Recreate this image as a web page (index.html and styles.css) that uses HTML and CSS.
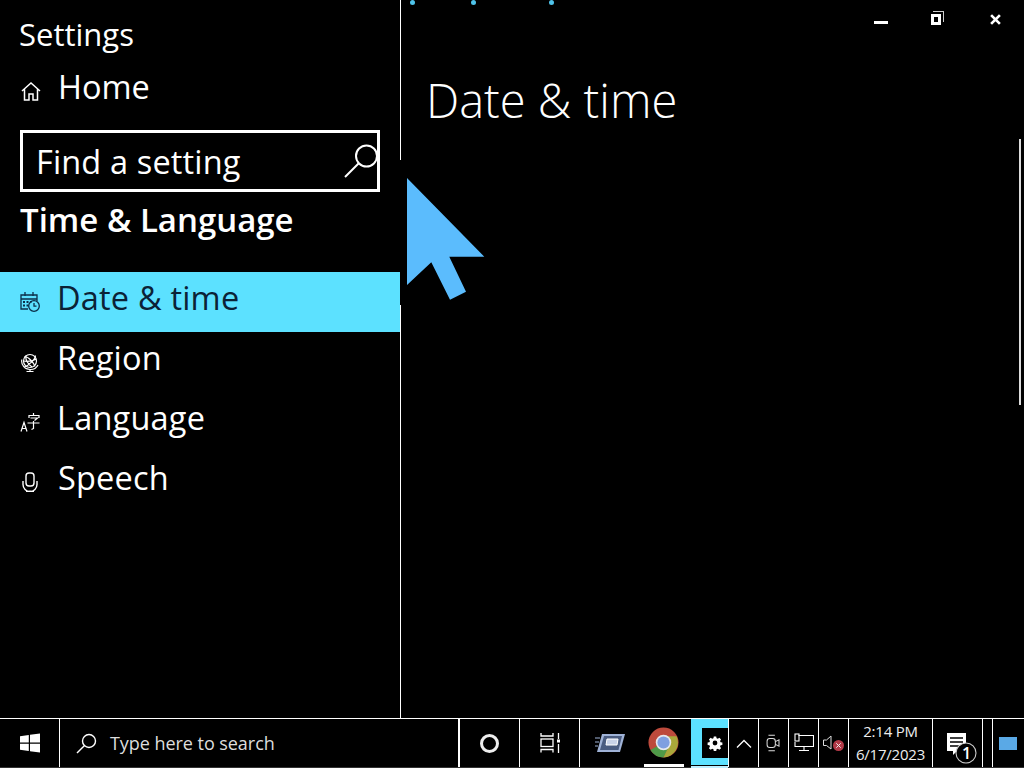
FILE: index.html
```html
<!DOCTYPE html>
<html lang="en">
<head>
<meta charset="utf-8">
<title>Settings - Date &amp; time</title>
<link rel="stylesheet" href="styles.css">
</head>
<body>
<div class="screen">
  <div class="window">
    <aside class="sidebar">
      <div class="app-title">Settings</div>
      <div class="home-row">
        <svg class="nav-icon" viewBox="0 0 20 20"><path d="M1 10 10 2l9 8M3.500 8V19H8v-6h4v6h4.500V8" fill="none" stroke="#fff" stroke-width="1.500"/></svg>
        <span class="home-label">Home</span>
      </div>
      <div class="search-box">
        <span class="search-text">Find a setting</span>
        <svg class="search-icon" viewBox="0 0 36 34"><circle cx="22.500" cy="12" r="10.500" fill="none" stroke="#fff" stroke-width="2"/><path d="M15 19 1 33" stroke="#fff" stroke-width="2" fill="none"/></svg>
      </div>
      <div class="section-title">Time &amp; Language</div>
      <nav class="nav">
        <div class="nav-item active">
          <svg class="nav-icon" viewBox="0 0 20 20"><g fill="none" stroke="#0b2f4a" stroke-width="1.300"><path d="M8 17H1V3h16v6M1 7h16M5 0v4M13 0v4"/><circle cx="14" cy="14" r="5.300"/><path d="M14 11v3.200h2.500"/></g><path d="M3 9h2v2H3zM6.500 9h2v2h-2zM10 9h2v1.500h-2zM3 12.500h2v2H3zM6.500 12.500h2v2h-2z" fill="#0b2f4a"/></svg>
          <span>Date &amp; time</span>
        </div>
        <div class="nav-item">
          <svg class="nav-icon" viewBox="0 0 20 20"><g fill="none" stroke="#fff" stroke-width="1.200"><circle cx="10" cy="9" r="6.500"/><path d="M4.500 4.500c4 0 9 6 10.500 10M15.500 3.500c0 4-7 10-11 11.500M6 3.500c-1 4 2 9 6 11.500M3.500 9c4 1 9 0 13-2M1.800 7.500A8.500 8.500 0 0 0 10 17.500a8.500 8.500 0 0 0 8-4.500M10 17.500V20M6.500 19.500h7"/></g></svg>
          <span>Region</span>
        </div>
        <div class="nav-item">
          <svg class="nav-icon" viewBox="0 0 20 20"><g fill="none" stroke="#fff" stroke-width="1.200"><path d="M1 19.500 4 10.500l3 9M2 16.500h4"/><path d="M13.500 1v2M9 6V3.500h10V6M10.500 6h7l-3 2.500M7.500 11h12M13.500 9v7.500l-2 1"/></g></svg>
          <span>Language</span>
        </div>
        <div class="nav-item speech">
          <svg class="nav-icon" viewBox="0 0 20 20"><g fill="none" stroke="#fff" stroke-width="1.400"><rect x="6" y="1" width="8" height="13" rx="3"/><path d="M3 9v3.500a7 7 0 0 0 14 0V9M10 18.500V20M6 19.500h8"/></g></svg>
          <span>Speech</span>
        </div>
      </nav>
    </aside>
    <main class="content">
      <div class="title-bar">
        <div class="dots"><i class="dot dot-a"></i><i class="dot dot-b"></i><i class="dot"></i></div>
        <div class="controls">
          <i class="ctl-min"></i>
          <i class="ctl-max"></i>
          <svg class="ctl-close" viewBox="0 0 10 10"><path d="M1 1 9 9M9 1 1 9" stroke="#fff" stroke-width="2.400"/></svg>
        </div>
      </div>
      <h1 class="page-title">Date &amp; time</h1>
      <i class="scrollbar"></i>
    </main>
  </div>
  <footer class="taskbar">
    <div class="cell start">
      <svg class="win-logo" viewBox="0 0 20 20"><path d="M0 3.200 8.800 2v7.600H0zM10 1.800 20 .4v9.200H10zM0 10.800h8.800v7.200L0 16.800zM10 10.800h10v8.800l-10-1.400z" fill="#fff"/></svg>
    </div>
    <div class="cell search">
      <svg class="task-search" viewBox="0 0 21 21"><circle cx="13" cy="8" r="6.500" fill="none" stroke="#fff" stroke-width="1.400"/><path d="M8.300 12.700 1 20" stroke="#fff" stroke-width="1.400"/></svg>
      <span>Type here to search</span>
    </div>
    <div class="cell cortana"><i class="ring"></i></div>
    <div class="cell taskview">
      <svg class="tv-icon" viewBox="0 0 20 22"><g fill="none" stroke="#fff" stroke-width="1.300"><path d="M1 1v3h12V1M1 20.500v-3h12v3"/><rect x="1" y="7" width="12" height="7.500"/><path d="M18.500 1v6M18.500 12v9"/></g><rect x="17" y="7.500" width="3" height="3" fill="#fff"/></svg>
    </div>
    <div class="app-icons">
      <div class="app-cell reader">
        <svg class="reader-icon" viewBox="0 0 30 20"><path d="M7 1H30l-5 18H2z" fill="#9fb2d6"/><path d="M9 3H27l-3.500 14H5z" fill="#4a5c80"/><path d="M12 6h11l-1 6H11z" fill="#c9d3e8" stroke="#fff"/><path d="M0 5h5M0 9h4M0 13h3" stroke="#9fb2d6"/></svg>
      </div>
      <div class="app-cell chrome">
        <svg class="chrome-icon" viewBox="0 0 32 32"><circle cx="16" cy="16" r="15.500" fill="#bd4a3c"/><path d="M16 16 2.600 23.800A15.500 15.500 0 0 0 16 31.500L24 16z" fill="#4e9a48"/><path d="M16 9.500h13.500A15.500 15.500 0 0 1 16 31.500L23 17z" fill="#a9a83a"/><circle cx="16" cy="16" r="8" fill="#e6e8ee"/><circle cx="16" cy="16" r="6.300" fill="#7f9fe0"/></svg>
        <i class="chrome-bar"></i>
      </div>
      <div class="app-cell settings-app">
        <div class="settings-inner">
          <svg class="gear" viewBox="0 0 24 24"><path fill="#fff" fill-rule="evenodd" d="M10 1h4l.6 3 2.100.9 2.600-1.700 2.800 2.800-1.700 2.600.9 2.100 3 .6v4l-3 .6-.9 2.100 1.700 2.600-2.800 2.800-2.600-1.700-2.100.9-.6 3h-4l-.6-3-2.100-.9-2.600 1.700-2.800-2.800 1.700-2.600-.9-2.100-3-.6v-4l3-.6.9-2.100L1.900 6l2.800-2.800 2.600 1.700L9.400 4zM12 8a4 4 0 1 0 0 8 4 4 0 0 0 0-8z" transform="translate(1.200 1.200) scale(.9)"/></svg>
        </div>
      </div>
    </div>
    <div class="cell chevron"><svg class="chev-icon" viewBox="0 0 16 9"><path d="M1 8.500 8 1.500l7 7" fill="none" stroke="#fff" stroke-width="1.300"/></svg></div>
    <div class="cell tray">
      <svg class="tray-meet" viewBox="0 0 16 24"><g fill="none" stroke="#ddd" stroke-width="1.100"><path d="M2.500 3.500h7M2.500 20.500h7"/><rect x="1" y="7" width="9" height="10" rx="3"/><path d="M10 10.500l4-2v7l-4-2"/></g></svg>
    </div>
    <div class="cell tray">
      <svg class="tray-net" viewBox="0 0 20 20"><g fill="none" stroke="#fff" stroke-width="1.100"><path d="M4.500 2.500H19.500V13.500H1V9"/><rect x="1" y="1" width="4" height="7"/><path d="M10 13.500V17M5 17.500h10"/></g></svg>
    </div>
    <div class="cell tray">
      <svg class="tray-vol" viewBox="0 0 21 16"><path d="M.5 5h3L8 1v13L3.500 10.500h-3z" fill="none" stroke="#ddd"/><circle cx="15.500" cy="10.500" r="5.500" fill="#b23a48"/><path d="M13.300 8.300l4.400 4.400M17.700 8.300l-4.400 4.400" stroke="#eee"/></svg>
    </div>
    <div class="cell clock"><span>2:14 PM</span><span>6/17/2023</span></div>
    <div class="cell action">
      <svg class="action-icon" viewBox="0 0 30 32"><path d="M1 1H20V19H11L7 23V19H1z" fill="#fff"/><path d="M4 6H17M4 10H17M4 14H13" stroke="#000" stroke-width="1.400"/><circle cx="20" cy="21" r="10" fill="#000" stroke="#ccc" stroke-width="1.100"/></svg>
      <span class="action-badge">1</span>
    </div>
    <div class="cell peek-gap"></div>
    <div class="cell desk"><i class="desk-rect"></i></div>
  </footer>
  <i class="line-gap"></i>
  <svg class="pointer" viewBox="0 0 90 134"><path d="M5 6 82.300 84.700H47.300L64 119.700 48 127.700 29.300 90.300 5 113z" fill="#5bbcfd"/></svg>
</div>
</body>
</html>
```

FILE: styles.css
```css
* { box-sizing: border-box; }
html, body { margin: 0; padding: 0; height: 100%; background: #000; }
body { font-family: "Open Sans", "Noto Sans", sans-serif; color: #fff; overflow: hidden; }
.screen { position: relative; width: 1024px; height: 768px; display: flex; flex-direction: column; background: #000; }
.window { display: flex; height: 718px; }

.sidebar { width: 401px; border-right: 1px solid #fff; flex: none; display: flex; flex-direction: column; }
.app-title { font-size: 31px; line-height: 40px; margin: 14px 0 0 19px; }
.home-row { display: flex; align-items: center; height: 44px; margin-top: 11px; padding-left: 21px; }
.home-row .nav-icon { margin-top: 8px; }
.home-label { font-size: 32.500px; margin: 0 0 0 17px; line-height: 44px; }
.nav-icon { width: 20px; height: 20px; flex: none; }
.search-box { display: flex; align-items: center; justify-content: space-between; width: 360px; height: 62px; margin: 21px 0 0 20px; border: 3px solid #fff; padding: 0 0 0 13px; }
.search-text { font-size: 32.500px; line-height: 56px; letter-spacing: .15px; margin-top: 2px; }
.search-icon { width: 36px; height: 34px; margin-right: -3px; }
.section-title { font-size: 33px; font-weight: 600; line-height: 40px; margin: 8px 0 0 20px; }
.nav { margin-top: 32px; display: flex; flex-direction: column; }
.nav-item { display: flex; align-items: center; height: 60px; padding-left: 20px; font-size: 32.500px; letter-spacing: .2px; }
.nav-item span { margin: -9px 0 0 17px; }
.nav-item.active { background: #5ce1ff; color: #0b2236; }
.speech span { margin-left: 18px; }

.content { flex: 1; position: relative; display: flex; flex-direction: column; }
.title-bar { height: 60px; display: flex; justify-content: space-between; align-items: flex-start; }
.dots { display: flex; padding: 0 0 0 9px; }
.dot { width: 5px; height: 5px; border-radius: 50%; background: #4fc3ea; margin-right: 56px; }
.dot-b { margin-right: 73px; }
.controls { display: flex; align-items: center; height: 38px; }
.ctl-min { width: 14px; height: 3px; background: #fff; margin: 6px 0 0 0; }
.ctl-max { width: 10px; height: 11px; border: 3px solid #fff; margin: 0 0 0 43px; position: relative; }
.ctl-max::after { content: ""; position: absolute; right: -6px; top: -6px; width: 10px; height: 10px; border: solid #ccc; border-width: 1px 1px 0 0; }
.ctl-close { width: 11px; height: 11px; margin: 0 23px 0 49px; }
.page-title { font-size: 47px; font-weight: 300; line-height: 60px; margin: 10px 0 0 25px; }
.scrollbar { position: absolute; right: 3px; top: 139px; width: 2px; height: 266px; background: #ddd; }

.taskbar { height: 50px; border-top: 1px solid #fff; border-bottom: 1px solid #333; display: flex; align-items: stretch; }
.cell { border-right: 1px solid #fff; display: flex; align-items: center; justify-content: center; flex: none; }
.start { width: 60px; }
.win-logo { width: 20px; height: 20px; }
.search { width: 400px; justify-content: flex-start; padding-left: 16px; font-size: 18px; color: #ddd; letter-spacing: -.05px; border-right-width: 2px; }
.task-search { width: 21px; height: 21px; margin-right: 13px; }
.cortana, .taskview { width: 60px; border-right-width: 1px; }
.ring { width: 19px; height: 19px; border: 3px solid #eee; border-radius: 50%; }
.tv-icon { width: 20px; height: 22px; }
.app-icons { display: flex; width: 149px; flex: none; border-right: 1px solid #fff; }
.app-cell { display: flex; align-items: center; justify-content: center; position: relative; }
.reader { width: 60px; }
.reader-icon { width: 30px; height: 20px; }
.chrome { width: 52px; }
.chrome-icon { width: 31px; height: 31px; margin: 0 3px 1px 0; }
.chrome-bar { position: absolute; left: 4px; bottom: 0; width: 40px; height: 3px; background: #fff; }
.settings-app { width: 37px; height: 46px; background: #5ce1ff; align-items: flex-start; justify-content: flex-end; }
.settings-inner { width: 26px; height: 30px; margin-top: 9px; background: #000; display: flex; align-items: center; justify-content: center; }
.settings-app::after { content: ""; position: absolute; left: 0; right: 0; bottom: -3px; height: 2px; background: #bfefff; }
.gear { width: 16px; height: 16px; }
.chevron { width: 30px; }
.chev-icon { width: 16px; height: 9px; }
.tray { width: 30px; }
.tray-meet { width: 15px; height: 22px; }
.tray-net { width: 20px; height: 20px; }
.tray-vol { width: 21px; height: 16px; }
.clock { width: 84px; flex-direction: column; font-size: 15px; line-height: 23px; letter-spacing: -.2px; color: #eee; }
.action { width: 50px; position: relative; }
.action-icon { width: 30px; height: 32px; margin: 9px 0 0 7px; overflow: visible; }
.action-badge { position: absolute; left: 27px; top: 24px; font-size: 16px; font-weight: 600; line-height: 20px; width: 13px; text-align: center; }
.peek-gap { width: 10px; }
.desk { flex: 1; border-right: 0; justify-content: flex-start; padding-left: 6px; }
.desk-rect { width: 18px; height: 13px; background: #5aa9e6; }

.line-gap { position: absolute; left: 400px; top: 160px; width: 1px; height: 145px; background: #000; }
.pointer { position: absolute; left: 402px; top: 172px; width: 90px; height: 134px; }
```
